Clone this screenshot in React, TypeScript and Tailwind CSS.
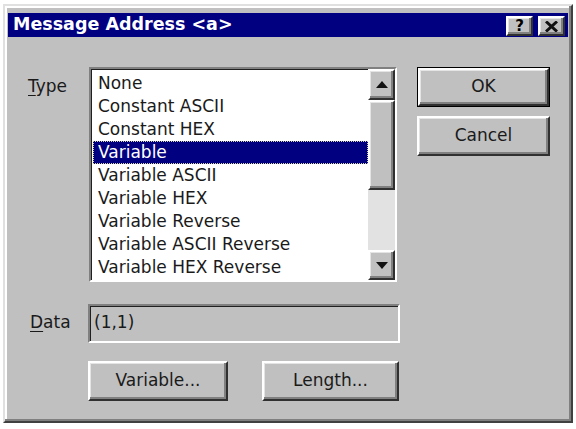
import React from "react";

const items = [
  "None",
  "Constant ASCII",
  "Constant HEX",
  "Variable",
  "Variable ASCII",
  "Variable HEX",
  "Variable Reverse",
  "Variable ASCII Reverse",
  "Variable HEX Reverse",
];

// raised win95 bevel, scaled up about 2x
const raised =
  "border-2 border-t-white border-l-white border-r-[#303030] border-b-[#303030] shadow-[inset_-2px_-2px_0_#808080,inset_1px_1px_0_#e4e4e4]";

const Button: React.FC<{ label: string; w: string; isDefault?: boolean }> = ({ label, w, isDefault }) => (
  <div className={`${w} h-[40px] ${isDefault ? "border border-black" : ""}`}>
    <div className={`w-full h-full bg-[#c0c0c0] ${raised} flex items-center justify-center text-[17px] text-[#1a1a1a]`}>
      {label}
    </div>
  </div>
);

const Arrow: React.FC<{ up?: boolean }> = ({ up }) => (
  <svg width="12" height="7" viewBox="0 0 12 7">
    {up ? <polygon points="6,0 12,7 0,7" fill="#111" /> : <polygon points="0,0 12,0 6,7" fill="#111" />}
  </svg>
);

const App: React.FC = () => {
  return (
    <div
      className="w-[576px] h-[429px] bg-white pt-[4px] pl-[3px]"
      style={{ fontFamily: '"DejaVu Sans", "Liberation Sans", sans-serif' }}
    >
      <div className="w-[570px] h-[419px] bg-[#c0c0c0] border-2 border-t-[#e0e0e0] border-l-[#e0e0e0] border-r-[#404040] border-b-[#404040] shadow-[inset_-2px_-2px_0_#808080,inset_2px_2px_0_#ffffff] px-[3px] pt-[7px]">
        {/* title bar */}
        <div className="h-[24px] bg-[#000080] flex items-center justify-between pl-[5px] pr-[3px]">
          <span className="text-white font-bold text-[17.5px] leading-none">Message Address &lt;a&gt;</span>
          <div className="flex items-center gap-[5px] mt-[2px]">
            <div className={`w-[27px] h-[20px] bg-[#c0c0c0] ${raised} flex items-center justify-center font-bold text-[15px] leading-none text-black`}>
              ?
            </div>
            <div className={`w-[27px] h-[20px] bg-[#c0c0c0] ${raised} flex items-center justify-center`}>
              <svg width="13" height="11" viewBox="0 0 13 11">
                <path d="M1 0.5 L12 10.5 M12 0.5 L1 10.5" stroke="#111" strokeWidth="3" />
              </svg>
            </div>
          </div>
        </div>

        {/* type row */}
        <div className="flex items-start mt-[30px]">
          <div className="w-[81px] pl-[20px] pt-[8px] text-[17px] leading-[23px] text-[#1a1a1a]">
            <span className="underline underline-offset-[3px]">T</span>ype
          </div>
          <div className="w-[308px] h-[215px] border-2 border-t-[#808080] border-l-[#808080] border-r-white border-b-white flex">
            <div className="flex-1 bg-white shadow-[inset_1px_1px_0_#202020] pt-[3px] pl-[2px]">
              {items.map((it) => (
                <div
                  key={it}
                  className={`h-[23px] leading-[23px] pl-[5px] text-[17px] whitespace-nowrap ${
                    it === "Variable"
                      ? "bg-[#000080] text-white outline-1 outline-dotted outline-[#d8d8a0] -outline-offset-1"
                      : "text-[#1a1a1a]"
                  }`}
                >
                  {it}
                </div>
              ))}
            </div>
            <div className="w-[27px] flex flex-col">
              <div className={`h-[31px] bg-[#c0c0c0] ${raised} flex items-center justify-center`}>
                <Arrow up />
              </div>
              <div className={`h-[90px] bg-[#c0c0c0] ${raised}`} />
              <div className="flex-1 bg-[#e2e2e2]" />
              <div className={`h-[30px] bg-[#c0c0c0] ${raised} flex items-center justify-center`}>
                <Arrow />
              </div>
            </div>
          </div>
          <div className="ml-[20px] flex flex-col gap-[9px]">
            <Button label="OK" w="w-[133px]" isDefault />
            <Button label="Cancel" w="w-[133px]" />
          </div>
        </div>

        {/* data row */}
        <div className="flex items-start mt-[22px]">
          <div className="w-[80px] pl-[22px] pt-[7px] text-[17px] leading-[23px] text-[#1a1a1a]">
            <span className="underline underline-offset-[3px]">D</span>ata
          </div>
          <div className="w-[312px] h-[39px] border-2 border-t-[#808080] border-l-[#808080] border-r-white border-b-white bg-[#c0c0c0] shadow-[inset_1px_1px_0_#202020] pl-[4px] pt-[5px] text-[17px] leading-[23px] text-[#1a1a1a]">
            (1,1)
          </div>
        </div>

        {/* bottom buttons */}
        <div className="flex mt-[18px] pl-[80px] gap-[34px]">
          <Button label="Variable..." w="w-[140px]" />
          <Button label="Length..." w="w-[137px]" />
        </div>
      </div>
    </div>
  );
};

export default App;
